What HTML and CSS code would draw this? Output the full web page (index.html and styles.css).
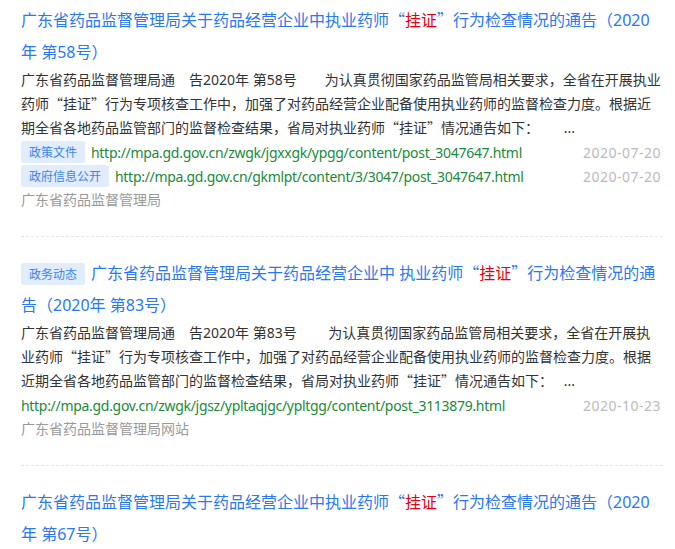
FILE: index.html
```html
<!DOCTYPE html>
<html lang="zh-CN">
<head>
    <meta charset="UTF-8">
    <meta name="viewport" content="width=device-width, initial-scale=1.0">
    <title>搜索结果 - 挂证</title>
    <link rel="stylesheet" href="styles.css">
</head>
<body>
    <div class="results">
        <div class="item">
            <h3 class="title"><a href="#">广东省药品监督管理局关于药品经营企业中执业药师<q><em>挂证</em></q>行为检查情况的通告（2020年 第58号）</a></h3>
            <p class="summary">广东省药品监督管理局通　告2020年 第58号　　为认真贯彻国家药品监管局相关要求，全省在开展执业药师<q>挂证</q>行为专项核查工作中，加强了对药品经营企业配备使用执业药师的监督检查力度。根据近期全省各地药品监管部门的监督检查结果，省局对执业药师<q>挂证</q>情况通告如下：　　 ...</p>
            <div class="row">
                <div class="row-left"><span class="tag">政策文件</span><a class="url" href="#">http://mpa.gd.gov.cn/zwgk/jgxxgk/ypgg/content/post_3047647.html</a></div>
                <span class="date">2020-07-20</span>
            </div>
            <div class="row">
                <div class="row-left"><span class="tag">政府信息公开</span><a class="url" href="#">http://mpa.gd.gov.cn/gkmlpt/content/3/3047/post_3047647.html</a></div>
                <span class="date">2020-07-20</span>
            </div>
            <div class="source">广东省药品监督管理局</div>
        </div>
        <div class="item">
            <h3 class="title"><span class="tag">政务动态</span><a href="#">广东省药品监督管理局关于药品经营企业中 执业药师<q><em>挂证</em></q>行为检查情况的通告（2020年 第83号）</a></h3>
            <p class="summary">广东省药品监督管理局通　告2020年 第83号　　 为认真贯彻国家药品监管局相关要求，全省在开展执业药师<q>挂证</q>行为专项核查工作中，加强了对药品经营企业配备使用执业药师的监督检查力度。根据近期全省各地药品监管部门的监督检查结果，省局对执业药师<q>挂证</q>情况通告如下：　 ...</p>
            <div class="row">
                <div class="row-left"><a class="url" href="#">http://mpa.gd.gov.cn/zwgk/jgsz/ypltaqjgc/ypltgg/content/post_3113879.html</a></div>
                <span class="date">2020-10-23</span>
            </div>
            <div class="source">广东省药品监督管理局网站</div>
        </div>
        <div class="item">
            <h3 class="title"><a href="#">广东省药品监督管理局关于药品经营企业中执业药师<q><em>挂证</em></q>行为检查情况的通告（2020年 第67号）</a></h3>
        </div>
    </div>
</body>
</html>
```

FILE: styles.css
```css
body {
    margin: 0;
    background: #fff;
    color: #333;
    font-family: "Noto Sans", "Noto Sans CJK SC", sans-serif;
    font-size: 14px;
}
.results {
    width: 642px;
    margin-left: 21px;
}
.item {
    padding: 20px 0 24px;
    border-bottom: 1px dashed #e6e6e6;
}
.item:first-child {
    padding-top: 4px;
}
.item:last-child {
    border-bottom: none;
}
a {
    text-decoration: none;
}
q {
    quotes: "“" "”";
}
/* CJK quotes are full width; keep their taller metrics out of the line box */
q::before,
q::after {
    font-family: "Noto Sans CJK SC", sans-serif;
    line-height: 1;
}
.title {
    margin: 0;
    font-size: 16px;
    font-weight: normal;
    line-height: 32px;
}
.title a {
    color: #2a78f2;
}
.title em {
    font-style: normal;
    color: #e60012;
}
.tag {
    display: inline-block;
    height: 22px;
    padding: 0 8px;
    margin-right: 6px;
    border-radius: 3px;
    background: #e1ecfc;
    color: #3a86f0;
    font-family: "Noto Sans CJK SC", sans-serif;
    font-size: 12px;
    line-height: 22px;
    vertical-align: middle;
}
.title .tag {
    position: relative;
    top: -1px;
}
.summary {
    margin: 0;
    line-height: 24px;
}
.row {
    display: flex;
    justify-content: space-between;
    align-items: center;
    height: 24px;
}
.row-left {
    display: flex;
    align-items: center;
}
.url {
    color: #1a8a3a;
    font-size: 14px;
    letter-spacing: -0.3px;
}
.date {
    margin-right: 2px;
    color: #bbb;
    font-size: 14px;
    letter-spacing: 0.5px;
}
.source {
    color: #999;
    line-height: 24px;
}
```
